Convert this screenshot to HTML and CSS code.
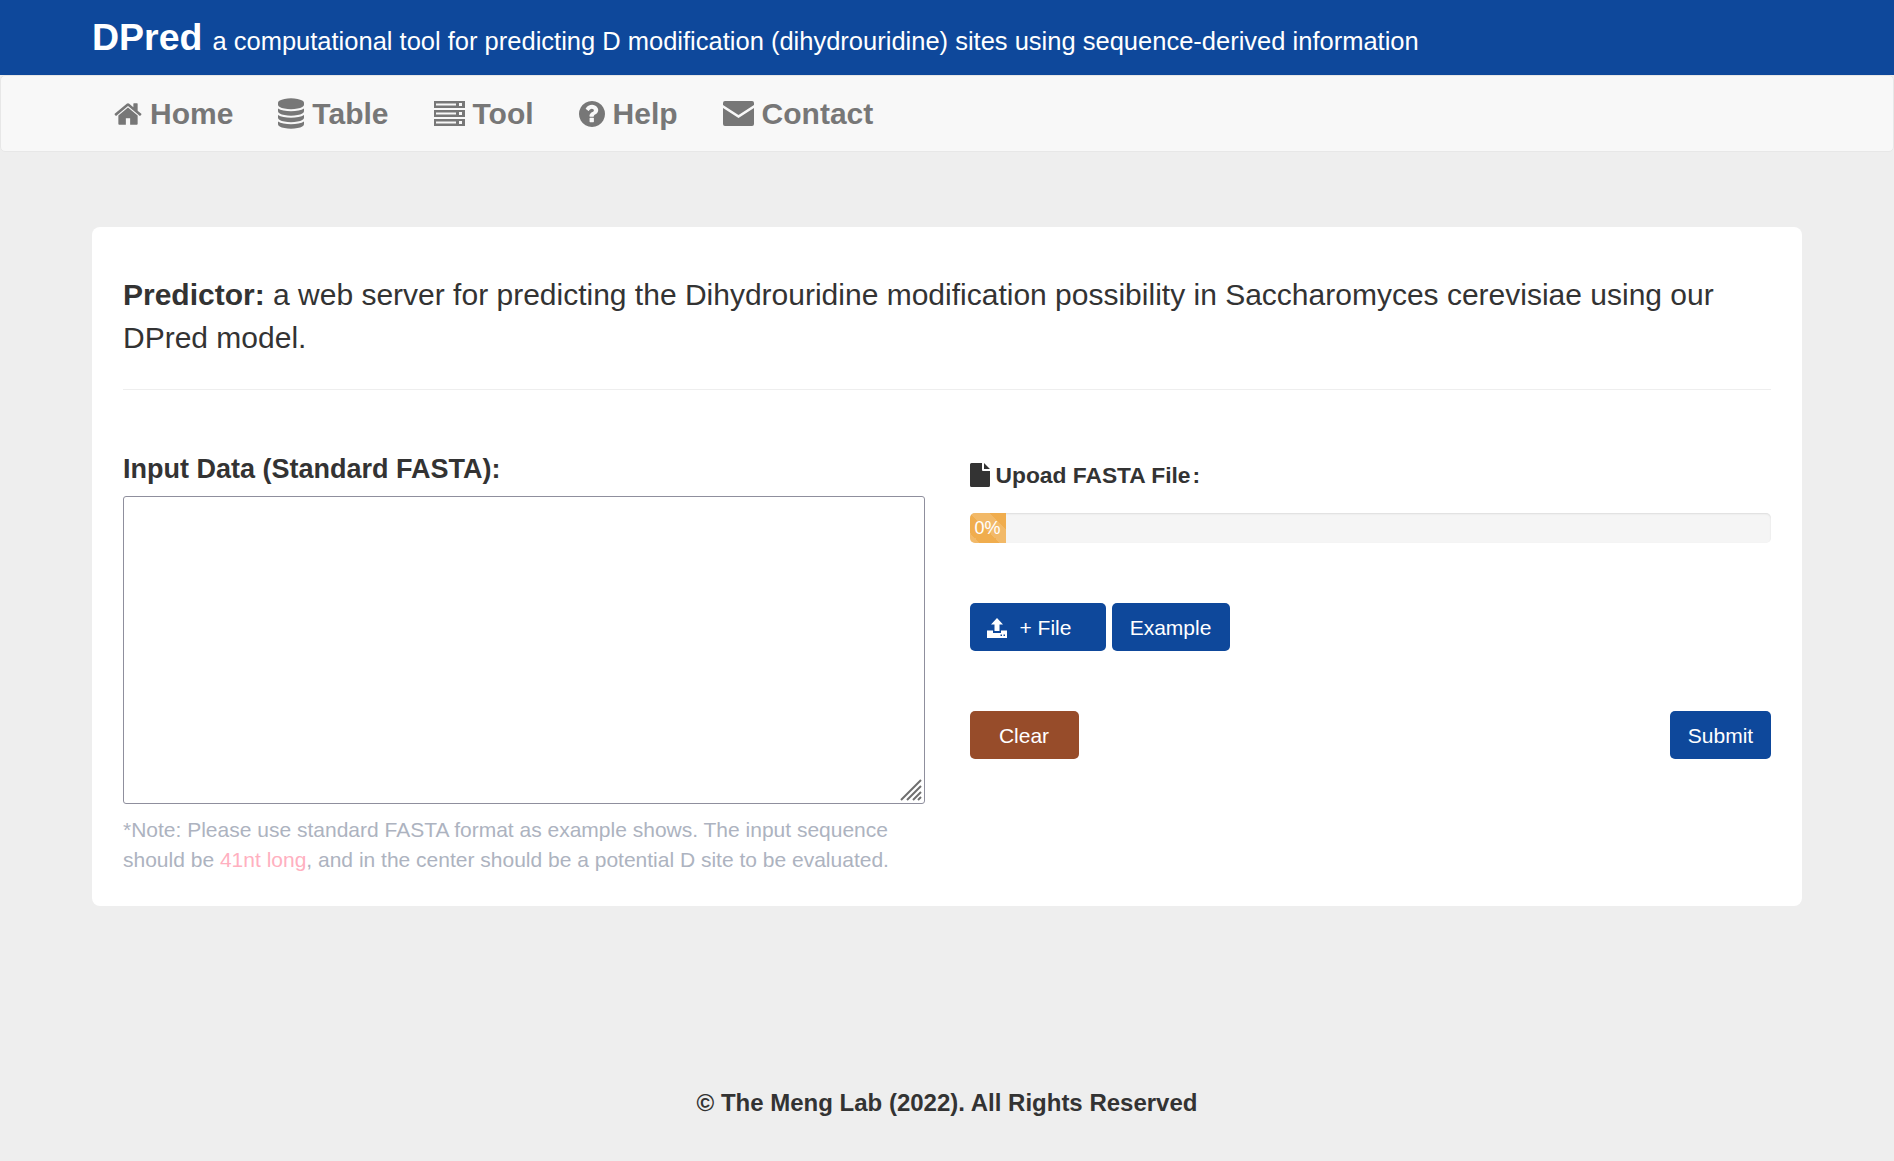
FILE: index.html
```html
<!DOCTYPE html>
<html lang="en">
<head>
<meta charset="utf-8">
<title>DPred</title>
<link rel="stylesheet" href="styles.css">
</head>
<body>
<header class="banner">
  <span class="brand">DPred</span>
  <span class="tagline">a computational tool for predicting D modification (dihydrouridine) sites using sequence-derived information</span>
</header>
<nav class="navbar">
  <a class="nav-item"><svg class="ico" viewBox="0 0 1664 1792" width="28" height="30"><path fill="currentColor" d="M1408 992v480q0 26-19 45t-45 19H960v-384H704v384H320q-26 0-45-19t-19-45V992q0-1 .5-3t.5-3l575-474 575 474q1 2 1 6zm223-69-62 74q-8 9-21 11h-3q-13 0-21-7L832 424 140 1001q-12 8-24 7-13-2-21-11l-62-74q-8-10-7-23.500t11-21.500L756 283q32-26 76-26t76 26l244 204V292q0-14 9-23t23-9h192q14 0 23 9t9 23v408l219 182q10 8 11 21.500t-7 23.500z"/></svg>Home</a>
  <a class="nav-item"><svg class="ico" viewBox="0 0 1536 1792" width="26" height="31"><path fill="currentColor" d="M768 768q237 0 443-43t325-127v170q0 69-103 128t-280 93.500T768 1024t-385-34.500T103 896 0 768V598q119 84 325 127t443 43zm0 768q237 0 443-43t325-127v170q0 69-103 128t-280 93.500-385 34.500-385-34.500T103 1664 0 1536v-170q119 84 325 127t443 43zm0-384q237 0 443-43t325-127v170q0 69-103 128t-280 93.500-385 34.500-385-34.500T103 1280 0 1152V982q119 84 325 127t443 43zM768 0q208 0 385 34.500t280 93.500 103 128v128q0 69-103 128t-280 93.500T768 640t-385-34.500T103 512 0 384V256q0-69 103-128t280-93.500T768 0z"/></svg>Table</a>
  <a class="nav-item"><svg class="ico" viewBox="0 0 31 25" width="31" height="25"><path fill="currentColor" fill-rule="evenodd" d="M0 0h31v7H0zM2 2.500v2h20v-2zM25 2v3h3V2zM0 9h31v7H0zM2 11.500v2h20v-2zM25 11v3h3v-3zM0 18h31v7H0zM2 20.500v2h20v-2zM25 20v3h3v-3z"/></svg>Tool</a>
  <a class="nav-item"><svg class="ico" viewBox="128 128 1536 1536" width="26" height="26"><path fill="currentColor" transform="translate(128 0)" d="M880 1344v-192q0-14-9-23t-23-9H656q-14 0-23 9t-9 23v192q0 14 9 23t23 9h192q14 0 23-9t9-23zm256-672q0-88-55.500-163T942 393t-170-41q-243 0-371 213-15 24 8 42l132 100q7 6 19 6 16 0 25-12 53-68 86-92 34-24 86-24 48 0 85.500 26t37.500 59q0 38-20 61t-68 45q-63 28-115.500 86.500T620 986v36q0 14 9 23t23 9h192q14 0 23-9t9-23q0-19 21.500-49.500T952 924q32-18 49-28.500t46-35 44.500-48 28-60.500 12.500-81zm400 224q0 209-103 385.500T1153.500 1561 768 1664t-385.500-103T103 1281.500 0 896t103-385.500T382.500 231 768 128t385.500 103T1433 510.500 1536 896z"/></svg>Help</a>
  <a class="nav-item"><svg class="ico" viewBox="0 0 31 25" width="31" height="25"><path fill="currentColor" d="M2 0h27q2 0 2 2v2L15.500 14 0 4V2q0-2 2-2zM0 7l15.500 10L31 7v16q0 2-2 2H2q-2 0-2-2z"/></svg>Contact</a>
</nav>
<main class="card">
  <p class="lead"><strong>Predictor:</strong> a web server for predicting the Dihydrouridine modification possibility in Saccharomyces cerevisiae using our DPred model.</p>
  <hr class="rule">
  <div class="columns">
    <section class="col-left">
      <label class="input-label" for="fasta">Input Data (Standard FASTA):</label>
      <div class="fasta-wrap">
        <textarea class="fasta" id="fasta"></textarea>
        <svg class="grip" viewBox="0 0 22 22" width="22" height="22"><path stroke="#6f6f6f" stroke-width="2" d="M1 21L21 1M7 21L21 7M13 21l8-8M18 21l3-3"/></svg>
      </div>
      <p class="note">*Note: Please use standard FASTA format as example shows. The input sequence should be <span class="accent">41nt long</span>, and in the center should be a potential D site to be evaluated.</p>
    </section>
    <section class="col-right">
      <h4 class="upload-title"><svg class="file-ico" viewBox="0 0 20 24" width="20" height="24"><path fill="currentColor" d="M0 1.500Q0 0 1.500 0H12v7q0 1 1 1h7v14.500q0 1.500-1.500 1.500h-17Q0 24 0 22.500zM14 0l6 6h-6z"/></svg>Upoad FASTA File<span class="colon">:</span></h4>
      <div class="progress"><div class="progress-bar">0%</div></div>
      <div class="file-row">
        <button class="btn btn-file" type="button"><svg class="up-ico" viewBox="0 0 20 20" width="20" height="20"><path fill="currentColor" d="M10 0l6 6.500h-3.500V13h-5V6.500H4zM0 12.500h6V15h8v-2.500h6V20H0zM13.500 16.500v1.500h1.500v-1.500zM16.500 16.500v1.500H18v-1.500z" fill-rule="evenodd"/></svg>+ File</button>
        <button class="btn btn-example" type="button">Example</button>
      </div>
      <div class="action-row">
        <button class="btn btn-clear" type="button">Clear</button>
        <button class="btn btn-submit" type="button">Submit</button>
      </div>
    </section>
  </div>
</main>
<footer class="foot">© The Meng Lab (2022). All Rights Reserved</footer>
</body>
</html>
```
FILE: styles.css
```css
* { box-sizing: border-box; }
html, body { margin: 0; padding: 0; }
body {
  background: #eeeeee;
  color: #333333;
  font-family: "Liberation Sans", Arial, sans-serif;
  height: 1161px;
  overflow: hidden;
}
.banner {
  height: 75px;
  background: #0e489b;
  color: #fff;
  padding: 16px 0 0 92px;
  display: flex;
  align-items: baseline;
  gap: 10px;
  white-space: nowrap;
}
.brand { font-size: 37.500px; font-weight: 700; line-height: 42px; }
.tagline { font-size: 25.500px; line-height: 42px; }
.navbar {
  height: 77px;
  background: #f8f8f8;
  border: 1px solid #e7e7e7;
  border-radius: 5px;
  padding-left: 113px;
  display: flex;
  align-items: center;
  gap: 45px;
}
.nav-item {
  display: flex;
  align-items: center;
  gap: 8px;
  color: #777777;
  font-size: 30px;
  font-weight: 700;
  line-height: 40px;
}
.ico { display: block; flex: none; }
.card {
  margin: 75px 92px 0;
  height: 679px;
  background: #fff;
  border-radius: 8px;
  padding: 46px 31px 0;
}
.lead { margin: 0; font-size: 30px; line-height: 43px; }
.rule { border: 0; border-top: 1px solid #eeeeee; margin: 30px 0 0; }
.columns { display: flex; gap: 45px; margin-top: 64px; }
.col-left, .col-right { flex: 1 1 0; min-width: 0; }
.input-label { display: block; font-size: 27px; font-weight: 700; line-height: 30px; margin-bottom: 12px; }
.fasta-wrap { position: relative; }
.fasta {
  display: block;
  width: 100%;
  height: 308px;
  border: 1px solid #8f8f9d;
  border-radius: 3px;
  background: #fff;
  resize: none;
}
.grip { position: absolute; right: 3px; bottom: 3px; }
.note { margin: 11px 0 0; font-size: 21px; line-height: 30px; color: #adb3c0; }
.accent { color: #ffb0c0; }
.upload-title { margin: 6px 0 0; display: flex; align-items: center; font-size: 22.800px; font-weight: 700; line-height: 30px; }
.file-ico { margin-right: 6px; }
.colon { margin-left: 2px; }
.progress { margin-top: 23px; height: 30px; background: #f5f5f5; border-radius: 5px; box-shadow: inset 0 1px 2px rgba(0,0,0,.1); overflow: hidden; }
.progress-bar {
  width: 36px;
  height: 30px;
  background-color: #f0ad4e;
  background-image: linear-gradient(45deg, rgba(255,255,255,.15) 25%, transparent 25%, transparent 50%, rgba(255,255,255,.15) 50%, rgba(255,255,255,.15) 75%, transparent 75%);
  background-size: 40px 40px;
  color: #fff;
  font-size: 18px;
  line-height: 30px;
  text-align: center;
}
.btn {
  height: 48px;
  border: 0;
  border-radius: 5px;
  color: #fff;
  background: #0e489b;
  font-family: inherit;
  font-size: 21px;
  padding: 1px 0 0;
}
.file-row { display: flex; gap: 6px; margin-top: 60px; }
.btn-file { width: 136px; display: flex; align-items: center; padding-left: 17px; }
.up-ico { margin-right: 13px; }
.btn-example { width: 118px; }
.action-row { display: flex; justify-content: space-between; margin-top: 60px; }
.btn-clear { width: 109px; background: #974c2a; }
.btn-submit { width: 101px; }
.foot { margin-top: 182px; text-align: center; font-size: 24px; font-weight: 700; line-height: 30px; }
```
